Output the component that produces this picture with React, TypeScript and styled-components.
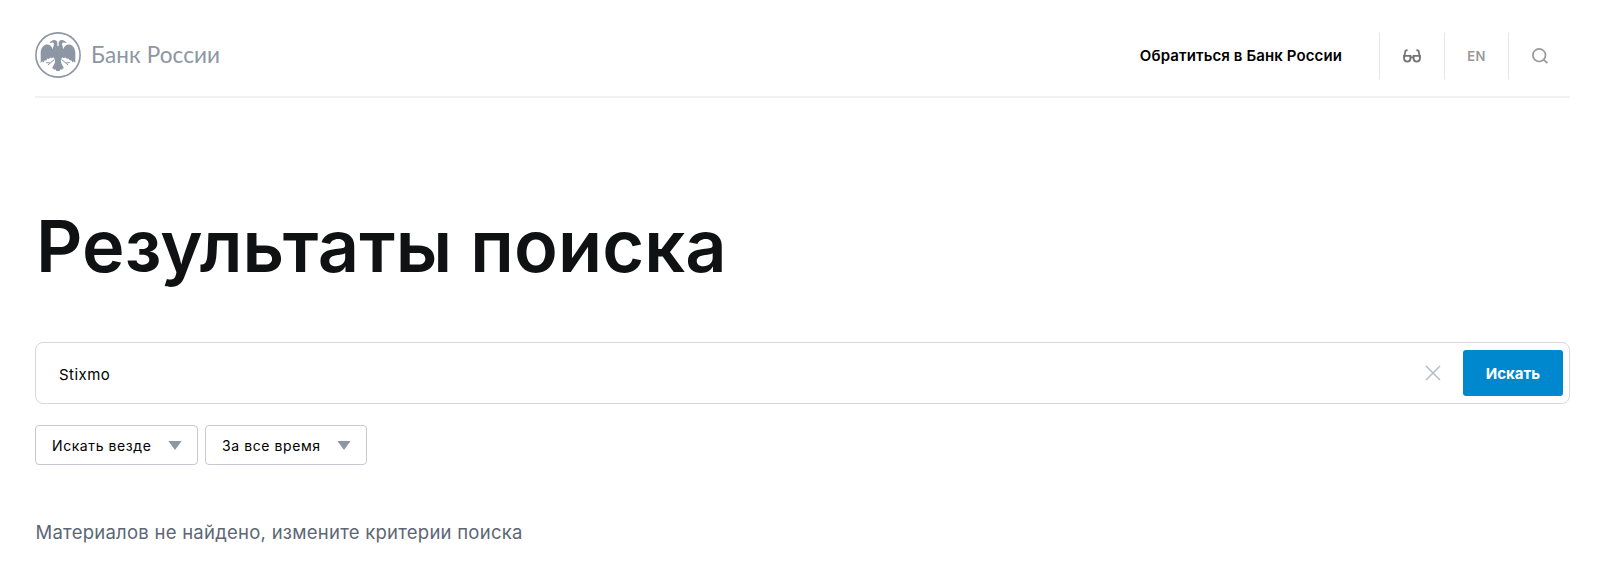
import styled, {createGlobalStyle} from "styled-components";

interface SelectProps {
    label: string
    width: number
}

// one half of the eagle, mirrored for the other side
const EAGLE_HALF = "M23.1 14.5 L22.3 13.6 V10.6 C22.2 8.8 20.4 7.7 18.6 8.1 L16.2 8.9 L14.2 11 L18 10.6 L19 11.8 C18.6 13.6 18.3 15.4 17.6 17.2 C16.8 14 14.4 12.3 11.4 12.6 C8 13.2 6 16.6 5.7 20 V31 L7.4 29.2 L8.4 30.6 L9.8 28.2 L11.2 28.6 L12.4 26.6 L14 27 L15.2 25.6 L17 26 L19 25.6 L20.2 28.4 L19.6 31.6 L17 36.2 L18.4 36.4 L18.8 37.8 L20.4 37.2 L21.2 38.8 L23.1 39.2 Z"

function Logo() {
    return <svg width="46" height="46" viewBox="0 0 46 46" fill="none">
        <circle cx="23" cy="23" r="22.1" stroke="#8d96a3" strokeWidth="1.6"/>
        <path fill="#8d96a3" d={EAGLE_HALF}/>
        <path fill="#8d96a3" transform="matrix(-1 0 0 1 46 0)" d={EAGLE_HALF}/>
        <path stroke="#8d96a3" strokeWidth="1"
              d="M19.4 27.6 L15.2 31 L11.2 30.6 M15.2 31 L12.8 33.2 M26.6 27.6 L30.8 31 L34.8 30.6 M30.8 31 L33.2 33.2"/>
    </svg>
}

function GlassesIcon() {
    return <svg width="18" height="14" viewBox="0 0 18 14" fill="none" stroke="#737373" strokeWidth="1.8">
        <path d="M4.6 1.3 C2.8 1 2.3 1.8 2.1 3.2 L1.1 8.6"/>
        <path d="M13.4 1.3 C15.2 1 15.7 1.8 15.9 3.2 L16.9 8.6"/>
        <path d="M1.1 6.8 H7.4 V9.6 C7.4 11.6 6.2 12.6 4.3 12.6 C2.4 12.6 1.1 11.6 1.1 9.6 Z"/>
        <path d="M16.9 6.8 H10.6 V9.6 C10.6 11.6 11.8 12.6 13.7 12.6 C15.6 12.6 16.9 11.6 16.9 9.6 Z"/>
        <path d="M7.4 8.4 H10.6"/>
    </svg>
}

function Select({label, width}: SelectProps) {
    return <SelectButton $width={width}>
        <SelectLabel>{label}</SelectLabel>
        <svg width="14" height="9" viewBox="0 0 14 9">
            <path d="M0.4 0 H13.6 L7 9 Z" fill="#8d96a3"/>
        </svg>
    </SelectButton>
}

function App() {
    return <Page>
        <GlobalStyle/>
        <Header>
            <Brand>
                <Logo/>
                <BrandName>Банк России</BrandName>
            </Brand>
            <Tools>
                <ContactLink>Обратиться в Банк России</ContactLink>
                <Tool $width={65}><GlassesIcon/></Tool>
                <Tool $width={64}>EN</Tool>
                <Tool $width={62}>
                    <svg width="16" height="16" viewBox="0 0 16 16" fill="none" stroke="#999" strokeWidth="1.7">
                        <circle cx="7.2" cy="7.2" r="6.3"/>
                        <path d="M11.6 11.6 L15.4 15.2"/>
                    </svg>
                </Tool>
            </Tools>
        </Header>
        <Title>Результаты поиска</Title>
        <SearchBox>
            <SearchInput defaultValue="Stixmo"/>
            <ClearButton>
                <svg width="16" height="16" viewBox="0 0 16 16" stroke="#b7bdc8" strokeWidth="1.5">
                    <path d="M1 1 L15 15 M15 1 L1 15"/>
                </svg>
            </ClearButton>
            <SubmitButton>Искать</SubmitButton>
        </SearchBox>
        <Filters>
            <Select label="Искать везде" width={163}/>
            <Select label="За все время" width={162}/>
        </Filters>
        <Message>Материалов не найдено, измените критерии поиска</Message>
    </Page>
}

const GlobalStyle = createGlobalStyle`
    * {
        box-sizing: border-box;
    }

    body {
        margin: 0;
        background: #fff;
    }

    button, input {
        font-family: inherit;
    }
`

const Page = styled.div`
    height: 570px;
    padding: 0 30px 0 35px;
    overflow: hidden;
    font-family: Inter, sans-serif;
    color: #000;
`

const Header = styled.header`
    display: flex;
    align-items: center;
    justify-content: space-between;
    height: 98px;
    padding-top: 15px;
    border-bottom: 2px solid #f1f1f1;
`

const Brand = styled.div`
    display: flex;
    align-items: center;
    gap: 10px;
    margin-bottom: 1px;
`

const BrandName = styled.span`
    font-family: Lato, sans-serif;
    font-size: 22.5px;
    line-height: 30px;
    letter-spacing: 0.1px;
    color: #8d96a3;
    white-space: nowrap;
`

const Tools = styled.nav`
    display: flex;
    align-items: center;
`

const ContactLink = styled.a`
    margin-right: 37px;
    font-size: 15px;
    font-weight: 600;
    line-height: 20px;
    letter-spacing: 0.11px;
    white-space: nowrap;
`

const Tool = styled.div<{ $width: number }>`
    display: flex;
    align-items: center;
    justify-content: center;
    width: ${({$width}) => $width}px;
    height: 46px;
    border-left: 1px solid #e6e6e6;
    font-size: 13px;
    font-weight: 600;
    letter-spacing: 0.5px;
    color: #999;
`

const Title = styled.h1`
    margin: 102px 0 0 1px;
    font-size: 72px;
    font-weight: 600;
    line-height: 92px;
    letter-spacing: 0.1px;
    color: #101113;
    white-space: nowrap;
`

const SearchBox = styled.form`
    display: flex;
    align-items: center;
    height: 62px;
    margin-top: 50px;
    padding: 0 6px 0 23px;
    border: 1.5px solid #d5d9df;
    border-radius: 8px;
`

const SearchInput = styled.input`
    flex: 1;
    padding: 2px 0 0;
    border: 0;
    outline: 0;
    background: none;
    font-size: 15px;
    letter-spacing: 0.45px;
    color: #000;
`

const ClearButton = styled.button`
    display: flex;
    margin-right: 22.5px;
    padding: 0;
    border: 0;
    background: none;
`

const SubmitButton = styled.button`
    width: 100px;
    height: 46px;
    padding: 0;
    border: 0;
    border-radius: 3px;
    background: #0088cf;
    font-size: 15px;
    font-weight: 700;
    color: #fff;
`

const Filters = styled.div`
    display: flex;
    gap: 7px;
    margin-top: 21px;
`

const SelectButton = styled.div<{ $width: number }>`
    display: flex;
    align-items: center;
    justify-content: space-between;
    width: ${({$width}) => $width}px;
    height: 40px;
    padding: 0 15px 0 16px;
    border: 1px solid #c6c9d0;
    border-radius: 4px;
`

const SelectLabel = styled.span`
    font-size: 14px;
    letter-spacing: 0.58px;
    white-space: nowrap;
`

const Message = styled.p`
    margin: 53px 0 0 0.5px;
    font-size: 18.5px;
    line-height: 28px;
    letter-spacing: 0.25px;
    color: #5c6675;
`

export default App;
